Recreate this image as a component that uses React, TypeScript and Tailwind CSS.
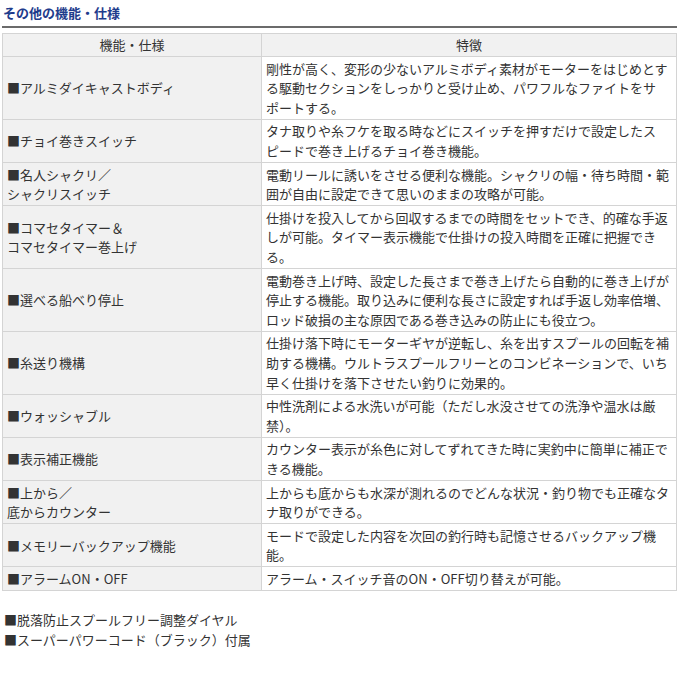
const rows: { name: string[]; desc: string }[] = [
  {
    name: ["■アルミダイキャストボディ"],
    desc: "剛性が高く、変形の少ないアルミボディ素材がモーターをはじめとする駆動セクションをしっかりと受け止め、パワフルなファイトをサポ\u2060ートする。",
  },
  {
    name: ["■チョイ巻きスイッチ"],
    desc: "タナ取りや糸フケを取る時などにスイッチを押すだけで設定したスピ\u2060ードで巻き上げるチョイ巻き機能。",
  },
  {
    name: ["■名人シャクリ／", "シャクリスイッチ"],
    desc: "電動リールに誘いをさせる便利な機能。シャクリの幅・待ち時間・範囲が自由に設定できて思いのままの攻略が可能。",
  },
  {
    name: ["■コマセタイマー＆", "コマセタイマー巻上げ"],
    desc: "仕掛けを投入してから回収するまでの時間をセットでき、的確な手返しが可能。タイマー表示機能で仕掛けの投入時間を正確に把握できる。",
  },
  {
    name: ["■選べる船べり停止"],
    desc: "電動巻き上げ時、設定した長さまで巻き上げたら自動的に巻き上げが停止する機能。取り込みに便利な長さに設定すれば手返し効率倍増、ロッド破損の主な原因である巻き込みの防止にも役立つ。",
  },
  {
    name: ["■糸送り機構"],
    desc: "仕掛け落下時にモーターギヤが逆転し、糸を出すスプールの回転を補助する機構。ウルトラスプールフリーとのコンビネーションで、いち早く仕掛けを落下させたい釣りに効果的。",
  },
  {
    name: ["■ウォッシャブル"],
    desc: "中性洗剤による水洗いが可能（ただし水没させての洗浄や温水は厳禁）。",
  },
  {
    name: ["■表示補正機能"],
    desc: "カウンター表示が糸色に対してずれてきた時に実釣中に簡単に補正できる機能。",
  },
  {
    name: ["■上から／", "底からカウンター"],
    desc: "上からも底からも水深が測れるのでどんな状況・釣り物でも正確なタナ取りができる。",
  },
  {
    name: ["■メモリーバックアップ機能"],
    desc: "モードで設定した内容を次回の釣行時も記憶させるバックアップ機能。",
  },
  {
    name: ["■アラームON・OFF"],
    desc: "アラーム・スイッチ音のON・OFF切り替えが可能。",
  },
];

export default function App() {
  return (
    <div
      lang="ja"
      className="bg-white text-[#333] text-[13px] leading-[19.6px] px-[2px] pt-[3px] w-[680px] min-h-[679px] [line-break:strict]"
      style={{ fontFamily: '"Noto Sans CJK JP", "Noto Sans", sans-serif' }}
    >
      <h2 className="font-bold text-[#1e3c8c] pl-[1px] pb-[3px] border-b-2 border-[#6b6b6b] w-[675px]">
        その他の機能・仕様
      </h2>

      <table className="mt-[5px] w-[675px] border-collapse border border-[#d4d4d4]">
        <thead>
          <tr className="bg-[#f1f1f1]">
            <th className="w-[259px] font-normal text-center py-[1.5px] px-[4px] border border-[#d4d4d4]">
              機能・仕様
            </th>
            <th className="font-normal text-center py-[1.5px] px-[4px] border border-[#d4d4d4]">
              特徴
            </th>
          </tr>
        </thead>
        <tbody>
          {rows.map((r) => (
            <tr key={r.name.join("")}>
              <td className="bg-[#f1f1f1] py-[1.5px] px-[4px] border border-[#d4d4d4] align-middle">
                {r.name.map((n, i) => (
                  <div key={i}>{n}</div>
                ))}
              </td>
              <td className="bg-white py-[1.5px] px-[4px] border border-[#d4d4d4] align-top">
                {r.desc}
              </td>
            </tr>
          ))}
        </tbody>
      </table>

      <ul className="mt-[19px] pl-[2px]">
        <li>■脱落防止スプールフリー調整ダイヤル</li>
        <li>■スーパーパワーコード（ブラック）付属</li>
      </ul>
    </div>
  );
}
